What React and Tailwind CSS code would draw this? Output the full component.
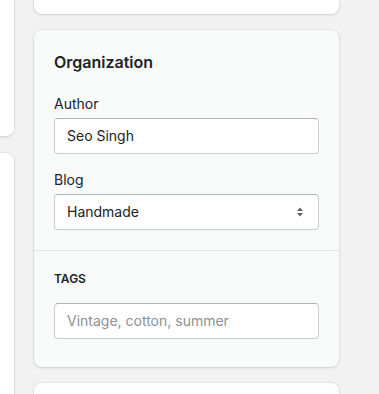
export default function App() {
  const font = { fontFamily: 'Inter, "Noto Sans", sans-serif' };
  return (
    <div className="w-[379px] h-[394px] overflow-hidden bg-[#f2f2f2] flex gap-5 text-[#202223]" style={font}>
      <div className="w-[14px] flex flex-col gap-[17px] shrink-0">
        <div className="h-[136px] bg-white rounded-br-lg shadow-[0_0_0_1px_rgba(63,63,68,0.05),0_1px_3px_rgba(63,63,68,0.15)]" />
        <div className="flex-1 bg-white rounded-tr-lg shadow-[0_0_0_1px_rgba(63,63,68,0.05),0_1px_3px_rgba(63,63,68,0.15)]" />
      </div>
      <div className="w-[305px] shrink-0 flex flex-col gap-4">
        <div className="h-[14px] bg-white rounded-b-lg shadow-[0_0_0_1px_rgba(63,63,68,0.05),0_1px_3px_rgba(63,63,68,0.15)]" />
        <div className="bg-[#f9fafa] rounded-lg shadow-[0_0_0_1px_rgba(63,63,68,0.05),0_1px_3px_rgba(63,63,68,0.15)]">
          <div className="p-5 pb-5">
            <h2 className="text-base leading-6 font-semibold">Organization</h2>
            <div className="mt-5">
              <label className="block text-sm leading-5">Author</label>
              <div className="mt-1 h-9 bg-white border border-[#c9cccf] border-t-[#aeb4b9] rounded-[4px] px-3 flex items-center text-sm">
                Seo Singh
              </div>
            </div>
            <div className="mt-4">
              <label className="block text-sm leading-5">Blog</label>
              <div className="mt-1 h-9 bg-white border border-[#c9cccf] border-t-[#aeb4b9] rounded-[4px] pl-3 pr-[14px] flex items-center justify-between text-sm">
                <span>Handmade</span>
                <svg width="8" height="12" viewBox="0 0 8 12" className="text-[#5c5f62]">
                  <path d="M4 1.5 L7 5 H1 Z" fill="currentColor" />
                  <path d="M4 10.5 L7 7 H1 Z" fill="currentColor" />
                </svg>
              </div>
            </div>
          </div>
          <div className="border-t border-[#e1e3e5] px-5 pt-5 pb-7">
            <div className="text-xs leading-4 font-semibold uppercase">Tags</div>
            <div className="mt-4 h-9 bg-white border border-[#c9cccf] border-t-[#aeb4b9] rounded-[4px] px-3 flex items-center text-sm text-[#8c9196]">
              Vintage, cotton, summer
            </div>
          </div>
        </div>
        <div className="flex-1 bg-white rounded-t-lg shadow-[0_0_0_1px_rgba(63,63,68,0.05),0_1px_3px_rgba(63,63,68,0.15)]" />
      </div>
    </div>
  );
}
